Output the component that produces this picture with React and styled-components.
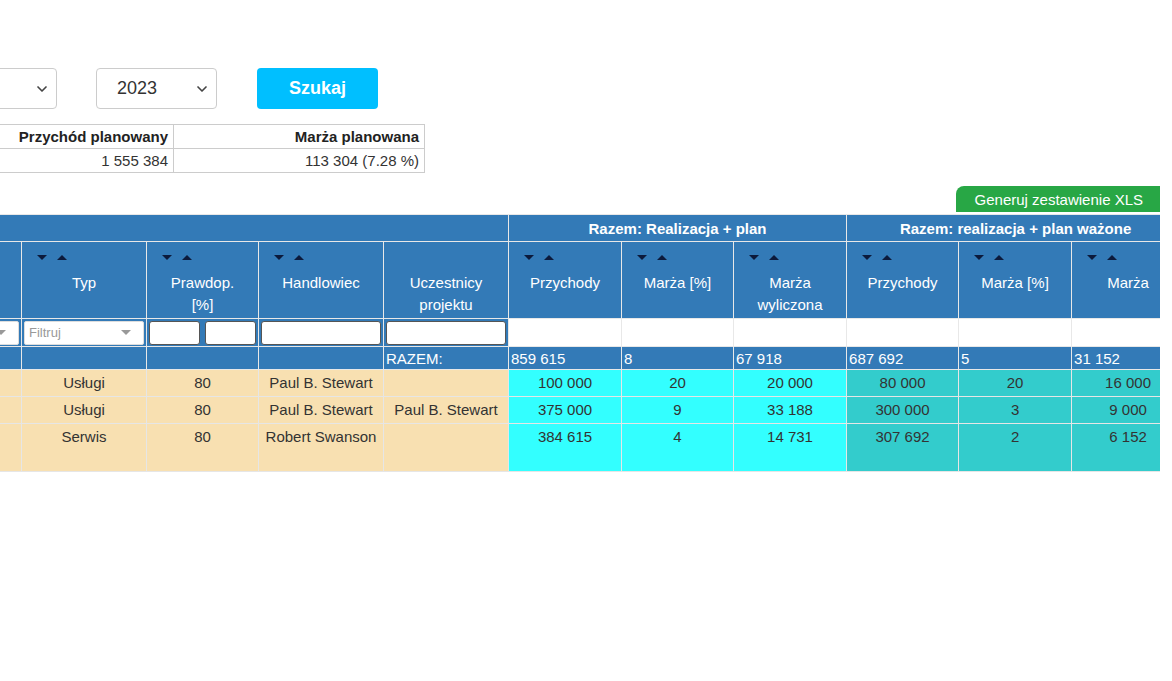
import styled, { createGlobalStyle } from 'styled-components'
import { ChevronDown } from 'lucide-react'

const GlobalStyle = createGlobalStyle`
  body {
    margin: 0;
    background: #fff;
    font-family: "Liberation Sans", Arial, sans-serif;
    color: #333;
  }
`

// widoczny fragment strony (strona jest przewinięta w poziomie)
const Viewport = styled.div`
  width: 1160px;
  height: 681px;
  overflow: hidden;
`

const Page = styled.div`
  width: 1560px;
  margin-left: -400px;
`

const Toolbar = styled.div`
  display: flex;
  align-items: center;
  gap: 39px;
  padding: 68px 0 0 137px;
`

const SelectBox = styled.div`
  box-sizing: border-box;
  width: ${p => p.$width || 121}px;
  height: 41px;
  border: 1px solid #ccc;
  border-radius: 4px;
  display: flex;
  align-items: center;
  justify-content: space-between;
  padding: 0 6px 0 20px;
  font-size: 18px;
  color: #333;
  background: #fff;
`

const SearchButton = styled.button`
  width: 121px;
  height: 41px;
  margin-left: 1px;
  border: none;
  border-radius: 4px;
  background: #00bfff;
  color: #fff;
  font-family: "Liberation Sans", Arial, sans-serif;
  font-size: 18px;
  font-weight: bold;
`

const Summary = styled.table`
  margin: 15px 0 0 71px;
  border-collapse: collapse;
  font-size: 15px;
  table-layout: fixed;

  th, td {
    width: 240px;
    border: 1px solid #ccc;
    padding: 3px 5px;
    height: 17px;
    text-align: right;
    white-space: nowrap;
  }
  th {
    color: #222;
    font-weight: bold;
  }
`

const ExportRow = styled.div`
  display: flex;
  justify-content: flex-end;
  margin-top: 13px;
`

const ExportButton = styled.button`
  height: 26px;
  padding: 0 17px 0 19px;
  border: none;
  border-radius: 8px 0 0 0;
  background: #28a745;
  color: #fff;
  font-family: "Liberation Sans", Arial, sans-serif;
  font-size: 15px;
`

const Grid = styled.table`
  margin: 2px 0 0 10px;
  border-collapse: collapse;
  table-layout: fixed;
  font-size: 15px;
  width: ${p => p.$width}px;
`

const GroupCell = styled.th`
  background: #337ab7;
  color: #fff;
  border: 1px solid #e8e8e8;
  height: 26px;
  padding: 0;
  font-weight: bold;
  text-align: center;
  white-space: nowrap;
`

const HeadCell = styled.th`
  background: #337ab7;
  color: #fff;
  border: 1px solid #e8e8e8;
  height: 76px;
  padding: 8px 5px 2px;
  box-sizing: border-box;
  vertical-align: top;
  font-weight: normal;
  text-align: center;
  line-height: 22px;
`

const Sorters = styled.div`
  display: flex;
  gap: 10px;
  height: 14px;
  padding-left: 10px;
  margin-bottom: 8px;
  align-items: center;
`

const Arrow = styled.span`
  width: 0;
  height: 0;
  border-left: 5px solid transparent;
  border-right: 5px solid transparent;
  ${p => (p.$up ? 'border-bottom: 5px solid #0c1a3c;' : 'border-top: 5px solid #0c1a3c;')}
`

const FilterCell = styled.td`
  background: ${p => (p.$plain ? '#fff' : '#337ab7')};
  border: 1px solid #e8e8e8;
  height: 28px;
  padding: 0 2px;
  box-sizing: border-box;
`

const FilterPair = styled.div`
  display: flex;
  gap: 5px;
`

const TextFilter = styled.div`
  box-sizing: border-box;
  height: 24px;
  flex: 1;
  background: #fff;
  border: 1px solid #555;
  border-radius: 3px;
`

const DropFilter = styled.div`
  box-sizing: border-box;
  height: 24px;
  background: #fff;
  border: 1px solid #ddd;
  border-radius: 2px;
  display: flex;
  align-items: center;
  justify-content: space-between;
  padding: 0 12px 0 4px;
  color: #999;
  font-size: 13px;

  &::after {
    content: '';
    border-left: 5px solid transparent;
    border-right: 5px solid transparent;
    border-top: 5px solid #999;
  }
`

const TotalCell = styled.td`
  background: #337ab7;
  color: #fff;
  border: 1px solid #e8e8e8;
  height: 23px;
  padding: 0 2px;
  box-sizing: border-box;
  white-space: nowrap;
`

const bgColors = { base: '#f8e0b1', plan: '#33ffff', weighted: '#33cccc' }

const Cell = styled.td`
  background: ${p => bgColors[p.$tone || 'base']};
  border: 1px solid #e6e6e6;
  padding: 4px 4px;
  line-height: 18px;
  vertical-align: top;
  text-align: center;
  color: #333;
`

// nazwa projektu z krótką notatką pod spodem
const ProjectNote = styled.div`
  font-size: 12px;
  line-height: 21px;
  color: #777;
`

const columns = [
  { key: 'lp', label: 'Lp.', width: 40 },
  { key: 'projekt', label: 'Projekt', width: 220, filter: 'text' },
  { key: 'klient', label: 'Klient', width: 151, filter: 'drop' },
  { key: 'typ', label: 'Typ', width: 125, filter: 'drop' },
  { key: 'prawd', label: <>Prawdop.<br />[%]</>, width: 112, filter: 'pair' },
  { key: 'handl', label: 'Handlowiec', width: 125, filter: 'text' },
  { key: 'ucz', label: <>Uczestnicy<br />projektu</>, width: 125, filter: 'text', noSort: true },
  { key: 'p1', label: 'Przychody', width: 113, tone: 'plan' },
  { key: 'm1', label: 'Marża [%]', width: 112, tone: 'plan' },
  { key: 'w1', label: <>Marża<br />wyliczona</>, width: 113, tone: 'plan' },
  { key: 'p2', label: 'Przychody', width: 112, tone: 'weighted' },
  { key: 'm2', label: 'Marża [%]', width: 113, tone: 'weighted' },
  { key: 'w2', label: 'Marża', width: 113, tone: 'weighted' },
]

const gridWidth = columns.reduce((sum, c) => sum + c.width, 0)

const totals = { ucz: 'RAZEM:', p1: '859 615', m1: '8', w1: '67 918', p2: '687 692', m2: '5', w2: '31 152' }

const rows = [
  { lp: '1', projekt: 'Wdrożenie systemu CRM', klient: 'Alfa', typ: 'Usługi', prawd: '80', handl: 'Paul B. Stewart', ucz: '', p1: '100 000', m1: '20', w1: '20 000', p2: '80 000', m2: '20', w2: '16 000' },
  { lp: '2', projekt: 'Modernizacja serwerowni', klient: 'Beta', typ: 'Usługi', prawd: '80', handl: 'Paul B. Stewart', ucz: 'Paul B. Stewart', p1: '375 000', m1: '9', w1: '33 188', p2: '300 000', m2: '3', w2: '9 000' },
  { lp: '3', projekt: 'Serwis infrastruktury', note: 'umowa roczna, 2 etapy', klient: 'Gamma', typ: 'Serwis', prawd: '80', handl: 'Robert Swanson', ucz: '', p1: '384 615', m1: '4', w1: '14 731', p2: '307 692', m2: '2', w2: '6 152' },
]

function Filter({ type }) {
  if (type === 'pair') {
    return (
      <FilterPair>
        <TextFilter />
        <TextFilter />
      </FilterPair>
    )
  }
  if (type === 'drop') return <DropFilter>Filtruj</DropFilter>
  return <FilterPair><TextFilter /></FilterPair>
}

function App() {
  return (
    <>
      <GlobalStyle />
      <Viewport>
        <Page>
          <Toolbar>
            <SelectBox $width={160}>Wszyscy <ChevronDown size={16} strokeWidth={2.5} color="#444" /></SelectBox>
            <SelectBox>Rok <ChevronDown size={16} strokeWidth={2.5} color="#444" /></SelectBox>
            <SelectBox>2023 <ChevronDown size={16} strokeWidth={2.5} color="#444" /></SelectBox>
            <SearchButton>Szukaj</SearchButton>
          </Toolbar>

          <Summary>
            <thead>
              <tr>
                <th>Przychód zrealizowany</th>
                <th>Przychód planowany</th>
                <th>Marża planowana</th>
              </tr>
            </thead>
            <tbody>
              <tr>
                <td>0</td>
                <td>1 555 384</td>
                <td>113 304 (7.28 %)</td>
              </tr>
            </tbody>
          </Summary>

          <ExportRow>
            <ExportButton>Generuj zestawienie XLS</ExportButton>
          </ExportRow>

          <Grid $width={gridWidth}>
            <colgroup>
              {columns.map(c => <col key={c.key} style={{ width: c.width }} />)}
            </colgroup>
            <thead>
              <tr>
                <GroupCell colSpan={7} />
                <GroupCell colSpan={3}>Razem: Realizacja + plan</GroupCell>
                <GroupCell colSpan={3}>Razem: realizacja + plan ważone</GroupCell>
              </tr>
              <tr>
                {columns.map(c => (
                  <HeadCell key={c.key}>
                    <Sorters>{!c.noSort && <><Arrow /><Arrow $up /></>}</Sorters>
                    {c.label}
                  </HeadCell>
                ))}
              </tr>
              <tr>
                {columns.map(c => (
                  <FilterCell key={c.key} $plain={!!c.tone}>
                    {c.filter && <Filter type={c.filter} />}
                  </FilterCell>
                ))}
              </tr>
              <tr>
                {columns.map(c => <TotalCell key={c.key}>{totals[c.key] || ''}</TotalCell>)}
              </tr>
            </thead>
            <tbody>
              {rows.map(r => (
                <tr key={r.lp}>
                  {columns.map(c => (
                    <Cell key={c.key} $tone={c.tone}>
                      {r[c.key]}
                      {c.key === 'projekt' && r.note && <ProjectNote>{r.note}</ProjectNote>}
                    </Cell>
                  ))}
                </tr>
              ))}
            </tbody>
          </Grid>
        </Page>
      </Viewport>
    </>
  )
}

export default App
